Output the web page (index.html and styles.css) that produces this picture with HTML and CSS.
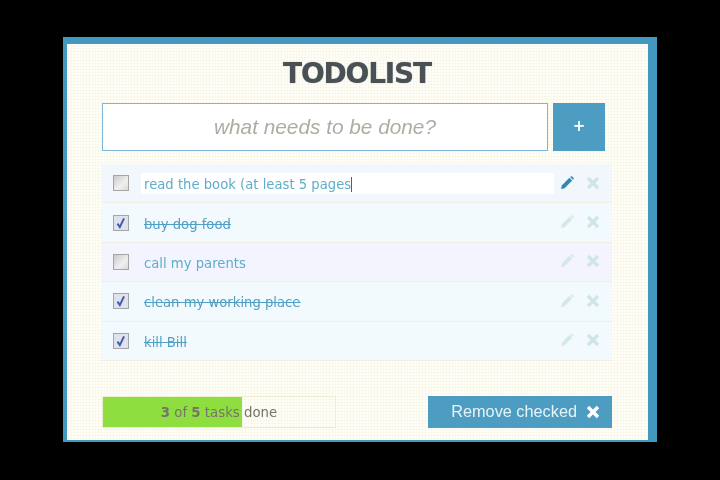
FILE: index.html
```html
<!DOCTYPE html>
<html lang="en">
<head>
  <meta charset="UTF-8" />
  <title>Todolist</title>
  <link rel="stylesheet" href="styles.css">
</head>
<body>

  <div class="todo-box">
    <h1>TODOLIST</h1>

    <form class="add-form">
      <input class="add-input" type="text" placeholder="what needs to be done?" />
      <button class="add-btn" type="button">+</button>
    </form>

    <ul class="todo-list">
      <li class="todo-row">
        <span class="check"></span>
        <span class="todo-text editing">read the book (at least 5 pages<i class="caret"></i></span>
        <svg class="pencil active" viewBox="0 0 14 14"><path d="M1 13l.8-3.6L9.4 1.8l2.8 2.8-7.6 7.6zM10.2 1l.7-.6c.4-.3.9-.3 1.2 0l1.5 1.5c.3.3.3.8 0 1.2l-.6.7z"/></svg>
        <svg class="cross" viewBox="0 0 14 14"><path d="M2 2l10 10M12 2L2 12"/></svg>
      </li>
      <li class="todo-row done">
        <span class="check"><svg viewBox="0 0 12 12"><path d="M3 6.5l2 3 3.6-7.5"/></svg></span>
        <span class="todo-text">buy dog food</span>
        <svg class="pencil" viewBox="0 0 14 14"><path d="M1 13l.8-3.6L9.4 1.8l2.8 2.8-7.6 7.6zM10.2 1l.7-.6c.4-.3.9-.3 1.2 0l1.5 1.5c.3.3.3.8 0 1.2l-.6.7z"/></svg>
        <svg class="cross" viewBox="0 0 14 14"><path d="M2 2l10 10M12 2L2 12"/></svg>
      </li>
      <li class="todo-row">
        <span class="check"></span>
        <span class="todo-text">call my parents</span>
        <svg class="pencil" viewBox="0 0 14 14"><path d="M1 13l.8-3.6L9.4 1.8l2.8 2.8-7.6 7.6zM10.2 1l.7-.6c.4-.3.9-.3 1.2 0l1.5 1.5c.3.3.3.8 0 1.2l-.6.7z"/></svg>
        <svg class="cross" viewBox="0 0 14 14"><path d="M2 2l10 10M12 2L2 12"/></svg>
      </li>
      <li class="todo-row done">
        <span class="check"><svg viewBox="0 0 12 12"><path d="M3 6.5l2 3 3.6-7.5"/></svg></span>
        <span class="todo-text">clean my working place</span>
        <svg class="pencil" viewBox="0 0 14 14"><path d="M1 13l.8-3.6L9.4 1.8l2.8 2.8-7.6 7.6zM10.2 1l.7-.6c.4-.3.9-.3 1.2 0l1.5 1.5c.3.3.3.8 0 1.2l-.6.7z"/></svg>
        <svg class="cross" viewBox="0 0 14 14"><path d="M2 2l10 10M12 2L2 12"/></svg>
      </li>
      <li class="todo-row done">
        <span class="check"><svg viewBox="0 0 12 12"><path d="M3 6.5l2 3 3.6-7.5"/></svg></span>
        <span class="todo-text">kill Bill</span>
        <svg class="pencil" viewBox="0 0 14 14"><path d="M1 13l.8-3.6L9.4 1.8l2.8 2.8-7.6 7.6zM10.2 1l.7-.6c.4-.3.9-.3 1.2 0l1.5 1.5c.3.3.3.8 0 1.2l-.6.7z"/></svg>
        <svg class="cross" viewBox="0 0 14 14"><path d="M2 2l10 10M12 2L2 12"/></svg>
      </li>
    </ul>

    <div class="footer">
      <div class="progress">
        <div class="progress-fill" style="width: 60%"></div>
        <span class="progress-label"><b>3</b> of <b>5</b> tasks done</span>
      </div>
      <button class="remove-btn" type="button">
        Remove checked
        <svg viewBox="0 0 14 14"><path d="M2 2l10 10M12 2L2 12"/></svg>
      </button>
    </div>
  </div>

</body>
</html>
```

FILE: styles.css
```css
* {
  margin: 0;
  padding: 0;
  box-sizing: border-box;
}

body {
  background: #000;
  font-family: 'DejaVu Sans', sans-serif;
  width: 720px;
  height: 480px;
  overflow: hidden;
}

.todo-box {
  width: 594px;
  height: 405px;
  margin: 37px 0 0 63px;
  padding: 0 36px 0 35px;
  border-style: solid;
  border-color: #4298bf;
  border-width: 7px 9px 2px 4px;
  background-color: #fefefb;
  background-image: radial-gradient(circle, #f8f5e4 0.9px, transparent 1.2px);
  background-size: 3px 3px;
  filter: blur(0.5px);
}

h1 {
  height: 59px;
  padding-top: 13px;
  color: #4a5155;
  font-size: 28px;
  line-height: 33px;
  font-weight: bold;
  text-align: center;
  letter-spacing: -1.2px;
  text-shadow: 0 0 1px #7d8f99;
}

.add-form {
  display: flex;
  gap: 5px;
  height: 48px;
  margin-bottom: 13px;
}

.add-input {
  width: 446px;
  border: 1px solid #7db7d6;
  background: #fff;
  font-family: 'Liberation Sans', sans-serif;
  font-size: 20.8px;
  font-style: italic;
  text-align: center;
  outline: none;
}

.add-input::placeholder {
  color: #aeaca2;
  opacity: 1;
}

.add-btn {
  width: 52px;
  padding-bottom: 3px;
  border: none;
  background: #4d9cc2;
  color: #fff;
  font-family: 'DejaVu Sans', sans-serif;
  font-size: 15px;
  font-weight: bold;
}

.todo-list {
  list-style: none;
}

.todo-row {
  display: flex;
  align-items: center;
  height: 39.4px;
  padding: 0 12px 0 11px;
  background: #f2fafe;
  border-bottom: 1px solid #f1efe4;
}

.todo-row:first-child {
  background: #f2f7fe;
}

.todo-row:nth-child(3) {
  background: #f4f4fe;
}

.check {
  flex: none;
  display: block;
  width: 16px;
  height: 16px;
  border: 1px solid #a5a5a5;
  background: linear-gradient(135deg, #c9c9c9, #f0f0f0 60%, #d8d8d8);
}

.check svg {
  display: block;
  width: 14px;
  height: 14px;
  fill: none;
  stroke: #3f5bab;
  stroke-width: 1.7;
}

.done .check {
  background: #dfe2ec;
}

.todo-text {
  flex: 1;
  height: 21px;
  margin: 1px 6px 0 12px;
  padding-left: 3px;
  color: #5fadcd;
  font-size: 13.2px;
  line-height: 23px;
  white-space: nowrap;
}

.done .todo-text {
  text-decoration: line-through;
  color: #519fc4;
}

.editing {
  background: #fff;
}

.caret {
  display: inline-block;
  width: 1px;
  height: 15px;
  background: #2c6f90;
  vertical-align: -3px;
}

.pencil {
  flex: none;
  width: 14px;
  height: 14px;
  margin: 0 12px 1px 0;
  fill: #d5e8e8;
}

.pencil.active {
  fill: #2f89af;
}

.cross {
  flex: none;
  width: 14px;
  height: 14px;
  margin-bottom: 1px;
  fill: none;
  stroke: #cfe5e6;
  stroke-width: 3.4;
}

.footer {
  display: flex;
  justify-content: space-between;
  margin-top: 35px;
}

.progress {
  position: relative;
  width: 234px;
  height: 32px;
  border: 1px solid #efecd0;
  text-align: center;
}

.progress-fill {
  position: absolute;
  top: 0;
  left: 0;
  height: 100%;
  background: #8ede3f;
}

.progress-label {
  position: relative;
  color: #74746a;
  font-size: 13.3px;
  line-height: 31px;
}

.remove-btn {
  display: flex;
  align-items: center;
  justify-content: flex-end;
  gap: 9px;
  width: 184px;
  height: 32px;
  padding-right: 12px;
  border: none;
  background: #4d9cc2;
  color: #e8f3f7;
  font-family: 'Liberation Sans', sans-serif;
  font-size: 16.3px;
}

.remove-btn svg {
  width: 14px;
  height: 14px;
  fill: none;
  stroke: #fff;
  stroke-width: 3.4;
}
```
